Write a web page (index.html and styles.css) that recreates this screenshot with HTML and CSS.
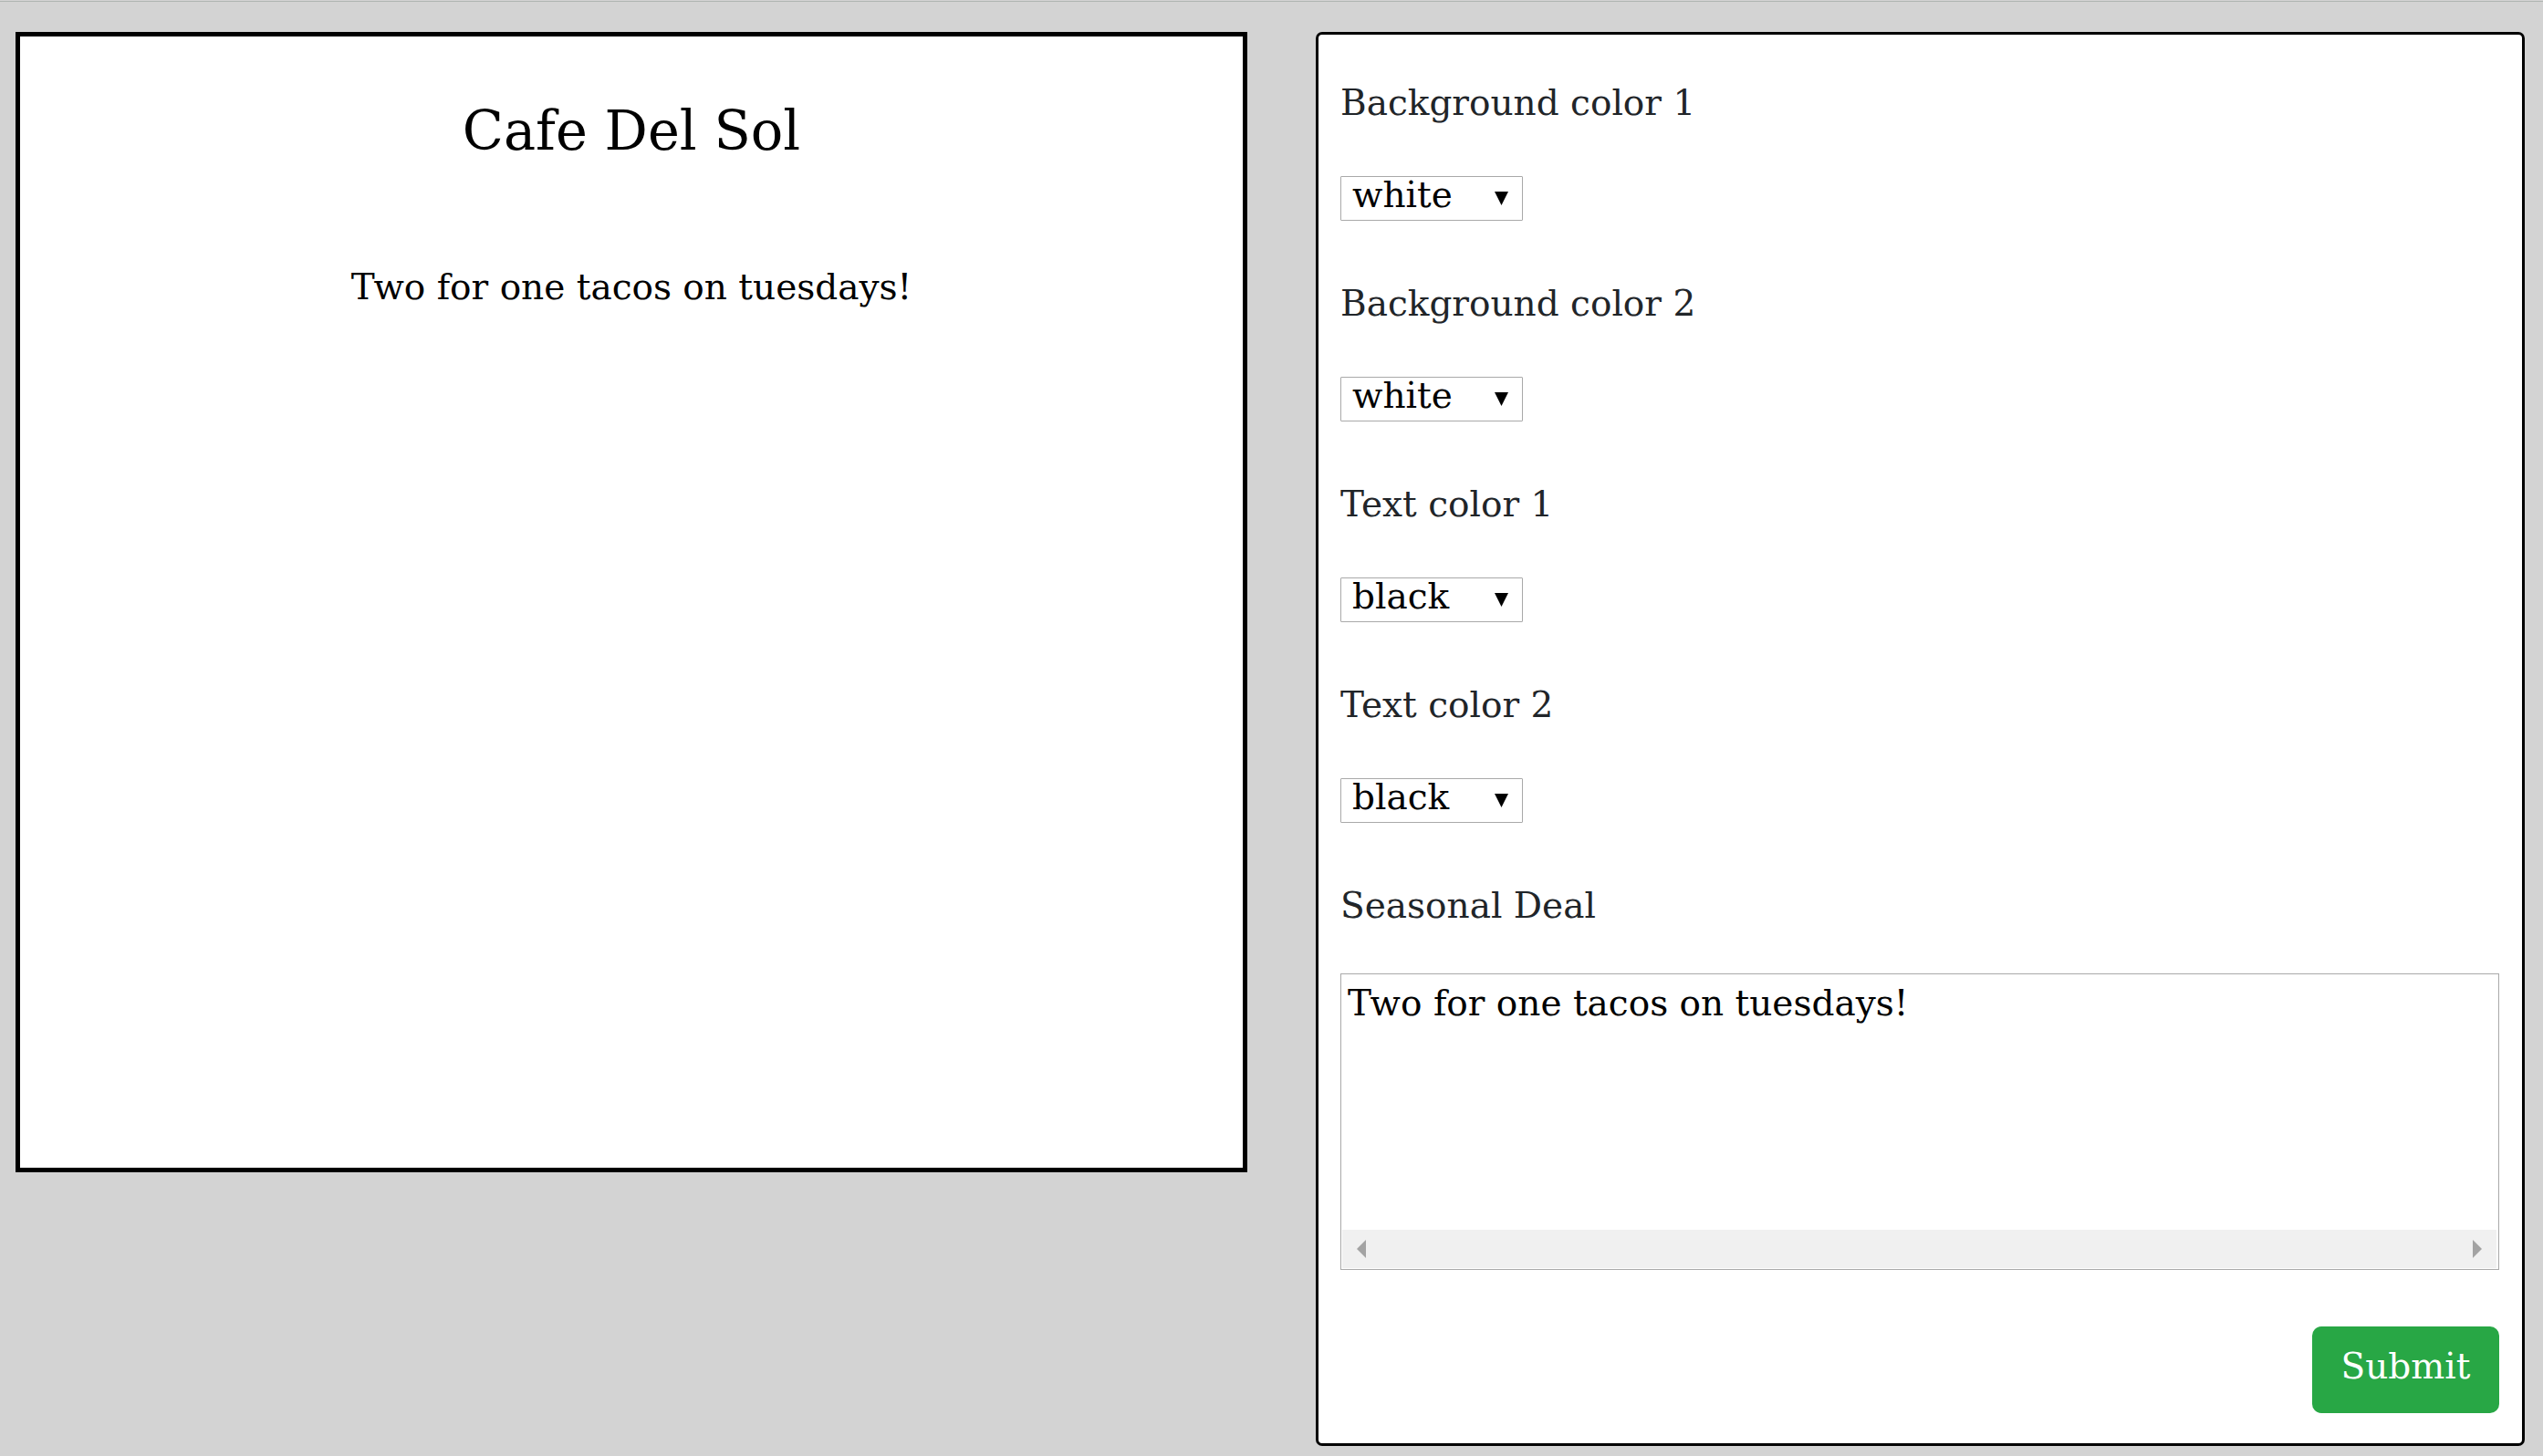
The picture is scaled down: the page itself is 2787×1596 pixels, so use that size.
FILE: index.html
```html
<!DOCTYPE html>
<html lang="en">
<head>
  <meta charset="utf-8">
  <meta name="viewport" content="width=device-width, initial-scale=1">
  <title>Cafe Del Sol</title>
  <link rel="stylesheet" href="styles.css">
</head>
<body>
  <main class="editor">
    <section class="preview">
      <h1 class="preview-title">Cafe Del Sol</h1>
      <p class="preview-deal">Two for one tacos on tuesdays!</p>
    </section>

    <form class="settings">
      <div class="field">
        <label for="background-1">Background color 1</label>
        <div class="picker">
          <select id="background-1"><option>white</option><option>black</option></select>
          <svg class="picker-arrow" viewBox="0 0 15 15" aria-hidden="true"><path d="M0 0h15L7.500 15z"/></svg>
        </div>
      </div>
      <div class="field">
        <label for="background-2">Background color 2</label>
        <div class="picker">
          <select id="background-2"><option>white</option><option>black</option></select>
          <svg class="picker-arrow" viewBox="0 0 15 15" aria-hidden="true"><path d="M0 0h15L7.500 15z"/></svg>
        </div>
      </div>
      <div class="field">
        <label for="text-1">Text color 1</label>
        <div class="picker">
          <select id="text-1"><option>black</option><option>white</option></select>
          <svg class="picker-arrow" viewBox="0 0 15 15" aria-hidden="true"><path d="M0 0h15L7.500 15z"/></svg>
        </div>
      </div>
      <div class="field">
        <label for="text-2">Text color 2</label>
        <div class="picker">
          <select id="text-2"><option>black</option><option>white</option></select>
          <svg class="picker-arrow" viewBox="0 0 15 15" aria-hidden="true"><path d="M0 0h15L7.500 15z"/></svg>
        </div>
      </div>
      <div class="field field-deal">
        <label for="deal">Seasonal Deal</label>
        <div class="deal-box">
          <textarea id="deal" wrap="off">Two for one tacos on tuesdays!</textarea>
          <div class="scroll-track" aria-hidden="true">
            <svg class="scroll-arrow" viewBox="0 0 10 20"><path d="M10 0v20L0 10z"/></svg>
            <svg class="scroll-arrow" viewBox="0 0 10 20"><path d="M0 0v20L10 10z"/></svg>
          </div>
        </div>
      </div>
      <button class="submit" type="submit">Submit</button>
    </form>
  </main>
</body>
</html>
```

FILE: styles.css
```css
* {
  box-sizing: border-box;
}

body {
  margin: 0;
  padding-top: 1px;
  background: #d3d3d3;
  color: #212529;
  font: 39px/62px "Special Elite", "DejaVu Serif", serif;
}

.editor {
  display: grid;
  grid-template-columns: 1350fr 1325fr;
  align-items: start;
  gap: 75px;
  padding: 33px 20px 11px 17px;
  border-top: 1px solid #b0b5b2;
}

.preview {
  min-height: 1250px;
  padding: 64px 24px;
  border: 5px solid #000;
  background: #fff;
  color: #000;
  text-align: center;
}

.preview-title {
  margin: 0 0 100px;
  font-size: 59px;
  font-weight: 400;
  line-height: 80px;
}

.preview-deal {
  margin: 0;
}

.settings {
  display: flex;
  flex-direction: column;
  gap: 60px;
  padding: 44px 25px 33px 24px;
  border: 3px solid #000;
  border-radius: 7px;
  background: #fff;
}

.field {
  display: flex;
  flex-direction: column;
  align-items: flex-start;
  gap: 49px;
}

.field-deal {
  align-items: stretch;
  gap: 43px;
}

.picker {
  position: relative;
  width: 200px;
}

.picker select {
  display: block;
  appearance: none;
  width: 100%;
  height: 49px;
  margin: 0;
  padding: 0 40px 10px 12px;
  border: 1px solid #a9a9a9;
  border-radius: 1px;
  background: #fff;
  color: #000;
  font: inherit;
  line-height: 40px;
}

.picker-arrow {
  position: absolute;
  top: 17px;
  right: 16px;
  width: 15px;
  height: 15px;
  pointer-events: none;
}

.deal-box {
  padding: 1px 2px 1px 1px;
  border: 1px solid #a9a9a9;
}

.deal-box textarea {
  display: block;
  width: 100%;
  height: 279px;
  margin: 0;
  padding: 0 6px;
  border: 0;
  outline: 0;
  resize: none;
  overflow: hidden;
  background: #fff;
  color: #000;
  font: inherit;
}

.scroll-track {
  display: flex;
  align-items: center;
  justify-content: space-between;
  height: 42px;
  padding: 0 16px;
  background: #f0f0f0;
}

.scroll-arrow {
  width: 10px;
  height: 20px;
  fill: #a3a3a3;
}

.submit {
  align-self: flex-end;
  min-width: 205px;
  height: 95px;
  margin: 2px 0 0;
  padding: 0 24px 8px;
  border: 0;
  border-radius: 10px;
  background: #28a745;
  color: #fff;
  font: inherit;
}
```
